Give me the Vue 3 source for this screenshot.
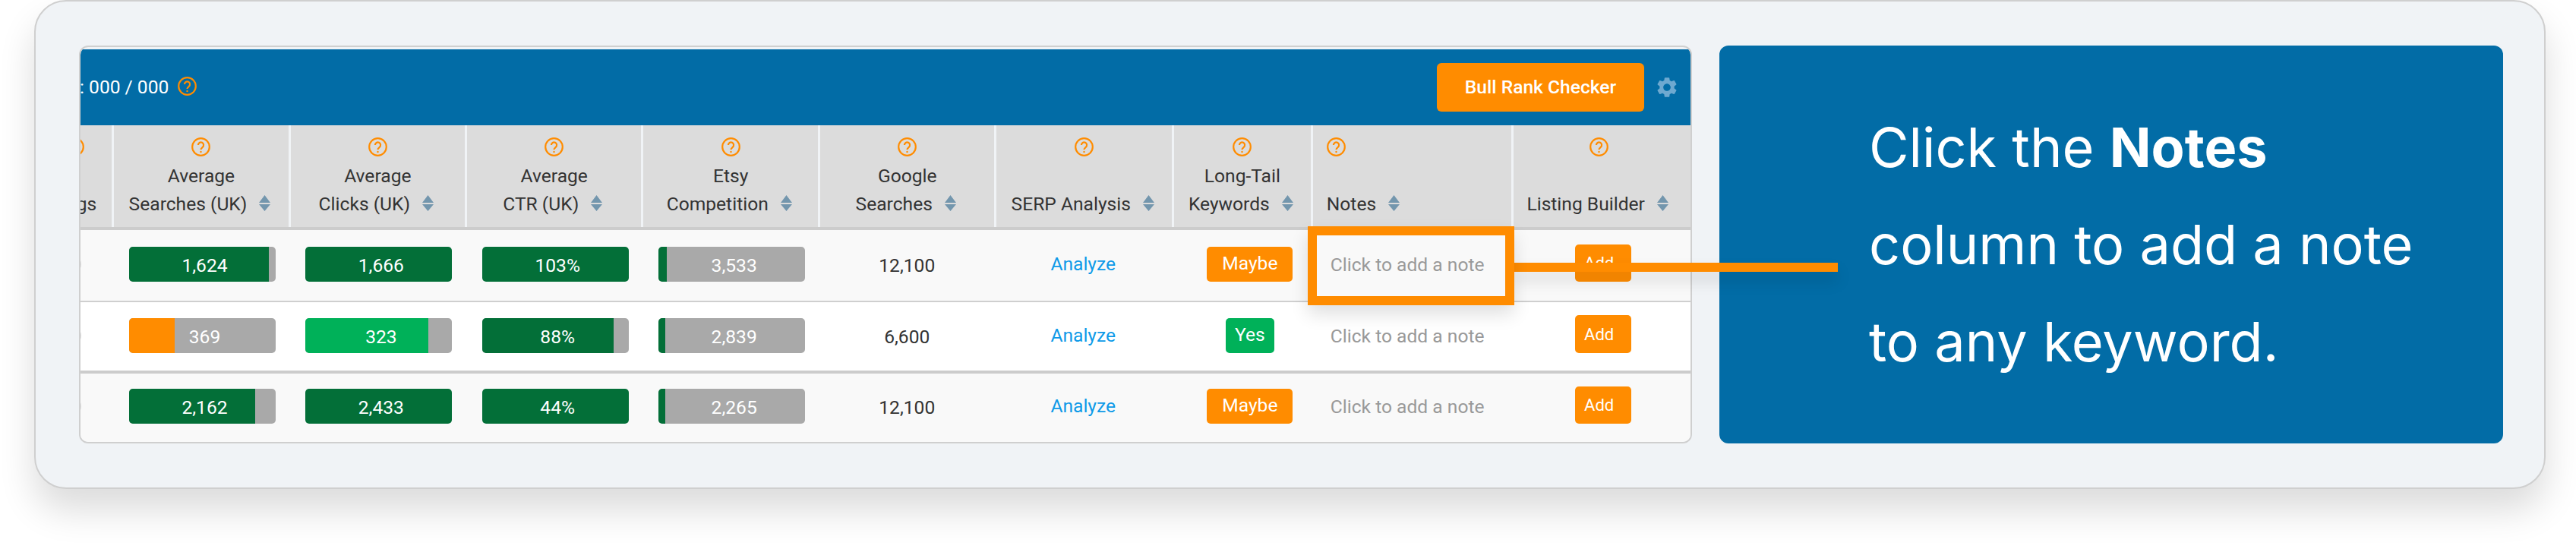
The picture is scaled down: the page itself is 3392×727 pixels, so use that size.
<script setup>
const columns = [
  { a: 'Average', b: 'Searches (UK)' },
  { a: 'Average', b: 'Clicks (UK)' },
  { a: 'Average', b: 'CTR (UK)' },
  { a: 'Etsy', b: 'Competition' },
  { a: 'Google', b: 'Searches' },
  { a: '', b: 'SERP Analysis' },
  { a: 'Long-Tail', b: 'Keywords' },
  { a: '', b: 'Notes', left: true },
  { a: '', b: 'Listing Builder' }
]
const rows = [
  { bars: [
      { t: '1,624', w: 95.2, c: 'dark' }, { t: '1,666', w: 100, c: 'dark' },
      { t: '103%', w: 100, c: 'dark' }, { t: '3,533', w: 5.4, c: 'dark' }
    ], searches: '12,100', tail: 'Maybe' },
  { bars: [
      { t: '369', w: 31.2, c: 'orange' }, { t: '323', w: 83.5, c: 'green' },
      { t: '88%', w: 89.8, c: 'dark' }, { t: '2,839', w: 4.8, c: 'dark' }
    ], searches: '6,600', tail: 'Yes' },
  { bars: [
      { t: '2,162', w: 86, c: 'dark' }, { t: '2,433', w: 100, c: 'dark' },
      { t: '44%', w: 100, c: 'dark' }, { t: '2,265', w: 4.8, c: 'dark' }
    ], searches: '12,100', tail: 'Maybe' }
]
</script>

<template>
  <div class="page">
    <div class="card">
      <div class="table">
        <div class="topbar">
          <div class="title">
            <span>: 000 / 000</span>
            <svg class="help" viewBox="0 0 25 25"><circle cx="12.5" cy="12.5" r="11.3" /><path d="M8.9 10a3.6 3.6 0 1 1 5.8 2.9c-1.3 1-2.2 1.6-2.2 3.2" /><circle class="dot" cx="12.5" cy="19" r="1.2" /></svg>
          </div>
          <div class="actions">
            <button class="bull">Bull Rank Checker</button>
            <svg class="gear" viewBox="2.5 2.3 19 19.4"><path d="M19.14 12.94c.04-.3.06-.61.06-.94 0-.32-.02-.64-.07-.94l2.03-1.58c.18-.14.23-.41.12-.61l-1.92-3.32c-.12-.22-.37-.29-.59-.22l-2.39.96c-.5-.38-1.03-.7-1.62-.94l-.36-2.54c-.04-.24-.24-.41-.48-.41h-3.84c-.24 0-.43.17-.47.41l-.36 2.54c-.59.24-1.13.57-1.62.94l-2.39-.96c-.22-.08-.47 0-.59.22L2.74 8.87c-.12.21-.08.47.12.61l2.03 1.58c-.05.3-.09.63-.09.94s.02.64.07.94l-2.03 1.58c-.18.14-.23.41-.12.61l1.92 3.32c.12.22.37.29.59.22l2.39-.96c.5.38 1.03.7 1.62.94l.36 2.54c.05.24.24.41.48.41h3.84c.24 0 .44-.17.47-.41l.36-2.54c.59-.24 1.13-.56 1.62-.94l2.39.96c.22.08.47 0 .59-.22l1.92-3.32c.12-.22.07-.47-.12-.61l-2.01-1.58zM12 15.6c-1.98 0-3.6-1.62-3.6-3.6s1.62-3.6 3.6-3.6 3.6 1.62 3.6 3.6-1.62 3.6-3.6 3.6z" /></svg>
          </div>
        </div>

        <div class="grid head">
          <div class="hcell first">
            <svg class="help" viewBox="0 0 25 25"><circle cx="12.5" cy="12.5" r="11.3" /></svg>
            <div class="line"></div>
            <div class="line">Listings</div>
          </div>
          <div v-for="c in columns" :key="c.b" class="hcell" :class="{ left: c.left }">
            <svg class="help" viewBox="0 0 25 25"><circle cx="12.5" cy="12.5" r="11.3" /><path d="M8.9 10a3.6 3.6 0 1 1 5.8 2.9c-1.3 1-2.2 1.6-2.2 3.2" /><circle class="dot" cx="12.5" cy="19" r="1.2" /></svg>
            <div class="line">{{ c.a }}</div>
            <div class="line sortline">
              <span>{{ c.b }}</span>
              <svg class="sort" viewBox="0 0 15 21"><path d="M7.5 0 15 10H0zM0 12h15l-7.5 9z" /></svg>
            </div>
          </div>
        </div>

        <div v-for="(r, i) in rows" :key="i" class="grid row" :class="'row' + i">
          <div class="cell stub"><i></i></div>
          <div v-for="b in r.bars" :key="b.t" class="cell barcell">
            <div class="bar">
              <div class="fill" :class="b.c" :style="{ width: b.w + '%' }"></div>
              <div class="bartext">{{ b.t }}</div>
            </div>
          </div>
          <div class="cell center"><span class="val">{{ r.searches }}</span></div>
          <div class="cell center serp"><span class="link">Analyze</span></div>
          <div class="cell center tail"><span class="badge" :class="r.tail === 'Yes' ? 'yes' : 'maybe'">{{ r.tail }}</span></div>
          <div class="cell note">Click to add a note</div>
          <div class="cell addcell"><button class="add">Add</button></div>
        </div>
      </div>

      <div class="panel">
        <p>Click the <b>Notes</b><br />column to add a note<br />to any keyword.</p>
      </div>

      <div class="connector"></div>
      <div class="hilite"></div>
    </div>
  </div>
</template>

<style scoped>
.page { width: 3392px; height: 727px; overflow: hidden; background: #fff; padding-left: 45px; box-sizing: border-box; font-family: Roboto, "Liberation Sans", sans-serif; }
.card { position: relative; box-sizing: border-box; width: 3306.5px; height: 644px; padding: 58px 0 0 57px; display: flex; gap: 36px; align-items: flex-start; background: #f0f3f6; border: 2px solid #cfcfcf; border-radius: 42px; box-shadow: 0 28px 48px rgba(0, 0, 0, .14); }
.table { box-sizing: border-box; width: 2124px; height: 523.5px; border: 2px solid #cfcfcf; border-radius: 12px; overflow: hidden; padding-top: 3px; }
.topbar { height: 99.7px; background: #026ca6; display: flex; justify-content: space-between; align-items: center; color: #fff; font-size: 24.6px; }
.title { display: flex; align-items: center; gap: 12px; margin-left: -1px; }
.help { width: 25px; height: 25px; flex: none; fill: none; stroke: #ff8c00; stroke-width: 2.2; }
.help .dot { fill: #ff8c00; stroke: none; }
.title .help { margin-top: -2px; }
.actions { display: flex; align-items: center; gap: 17px; padding-right: 18px; }
.bull { width: 273px; height: 63.7px; border: 0; border-radius: 6px; background: #ff8c00; color: #fff; font: 500 24.6px Roboto, sans-serif; padding: 0; }
.gear { width: 26px; height: 26px; fill: #6ea9d0; }
.grid { display: grid; grid-template-columns: 44.3px 232.4px 232.3px 232.5px 232.5px 232.5px 233.5px 182.8px 264.4px 234px; }
.head { box-sizing: border-box; height: 138.6px; border-bottom: 4px solid #cccccc; background: #dcdcdc; color: #333; font-size: 24.6px; }
.hcell { box-sizing: border-box; border-right: 3.6px solid #f0f3f6; padding-top: 16.3px; display: flex; flex-direction: column; align-items: center; min-width: 0; overflow: hidden; }
.hcell:last-child { border-right: 0; padding-right: 9px; }
.hcell .help { margin-bottom: 7.2px; }
.hcell.left { align-items: flex-start; padding-left: 18px; }
.first { align-items: flex-end; padding-right: 20px; }
.first .help { margin-right: 16.7px; }
.line { height: 37px; line-height: 37px; white-space: nowrap; flex: none; }
.sortline { display: flex; align-items: center; gap: 16px; }
.sort { width: 15px; height: 21px; fill: #7396ad; margin-right: 4px; margin-top: -3px; }
.row { box-sizing: border-box; background: #f9f9f9; align-items: end; border-bottom: 2.3px solid #cfcfcf; font-size: 24.6px; color: #333; }
.row0 { height: 94.7px; padding-bottom: 25px; }
.row1 { background: #fff; height: 93.7px; padding-bottom: 23px; border-bottom-width: 4.3px; border-bottom-color: #cccccc; }
.row2 { height: 90px; padding-bottom: 23.4px; border-bottom: 0; }
.cell { height: 46px; min-width: 0; }
.stub { overflow: hidden; }
.stub i { display: block; width: 26px; height: 26px; margin: 10px 0 0 -24.7px; border-radius: 50%; background: #d8d8d8; }
.barcell { padding-left: 19.7px; }
.bar { display: grid; width: 193px; height: 46px; border-radius: 5px; overflow: hidden; background: #a9a9a9; }
.bar > * { grid-area: 1 / 1; }
.fill { height: 100%; }
.fill.dark { background: #036f38; }
.fill.green { background: #00b159; }
.fill.orange { background: #ff8c00; }
.bartext { color: #fff; text-align: center; line-height: 46px; padding: 2px 0 0 6px; }
.center { display: flex; justify-content: center; padding-right: 4px; }
.center.serp { padding-right: 6px; }
.center.tail { padding: 0 0 0 17px; }
.val, .link { line-height: 46px; }
.val { padding-top: 2px; }
.link { color: #0d9ae8; }
.badge { height: 46px; line-height: 43px; border-radius: 5px; color: #fff; text-align: center; box-sizing: border-box; }
.maybe { width: 113px; background: #ff8c00; }
.yes { width: 63.5px; background: #00b159; }
.note { color: #999; line-height: 47px; padding-left: 23px; white-space: nowrap; }
.addcell { display: flex; align-items: flex-end; padding-left: 80.5px; }
.add { width: 74.5px; height: 49.3px; flex: none; border: 0; border-radius: 5px; background: #ff8c00; color: #fff; font: 400 22px/49px Roboto, sans-serif; padding: 0 10.6px 0 0; }
.panel { box-sizing: border-box; width: 1032px; height: 524px; background: #026ca6; border-radius: 12px; color: #fff; display: flex; align-items: center; padding-left: 197px; font-family: Inter, "Liberation Sans", sans-serif; }
.panel p { margin: 0; font-size: 72px; line-height: 127.8px; font-weight: 400; white-space: nowrap; }
.panel b { font-weight: 700; }
.connector { position: absolute; left: 1947px; top: 344px; width: 426px; height: 12px; background: #ff8c00; box-shadow: 0 12px 20px rgba(0, 0, 0, .13); }
.hilite { position: absolute; left: 1675px; top: 296px; width: 272px; height: 104px; box-sizing: border-box; border: 12px solid #ff8c00; box-shadow: 0 12px 22px rgba(0, 0, 0, .12); }
</style>
